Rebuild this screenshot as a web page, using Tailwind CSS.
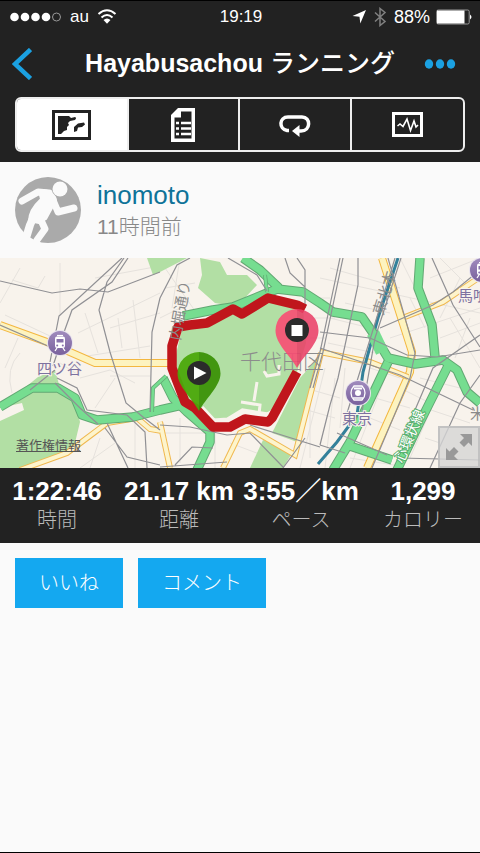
<!DOCTYPE html>
<html lang="ja">

<head>
  <meta charset="UTF-8" />
  <meta name="viewport" content="width=device-width, initial-scale=1.0" />
  <title>Hayabusachou ランニング</title>
  <script src="https://cdn.jsdelivr.net/npm/@tailwindcss/browser@4"></script>
</head>

<body class="min-h-screen bg-[#fafafa] border-b border-black font-['Liberation_Sans','Noto_Sans_CJK_JP',sans-serif]">
  <header class="bg-[#222] text-white border-t border-black">
    <!-- Status bar -->
    <div class="grid grid-cols-3 items-center h-8 pl-2.5 pr-2 text-[17px]">
      <div class="flex items-center gap-2">
        <svg class="w-[52px] h-3" viewBox="0 0 52 12" fill="#fff">
          <circle cx="4.5" cy="6" r="4.3" />
          <circle cx="15" cy="6" r="4.3" />
          <circle cx="25.500" cy="6" r="4.3" />
          <circle cx="36" cy="6" r="4.3" />
          <circle cx="46.500" cy="6" r="4" fill="none" stroke="#999" />
        </svg>
        <span>au</span>
        <svg class="w-5 h-4" viewBox="0 0 20 16" fill="none" stroke="#fff" stroke-width="2">
          <path d="M1.500 5Q10 -2.500 18.500 5M4.500 8.500Q10 3.500 15.500 8.500" />
          <path d="M6.500 11Q10 8 13.500 11L10 14.800z" fill="#fff" stroke="none" />
        </svg>
      </div>
      <div class="text-center">19:19</div>
      <div class="flex items-center justify-end gap-1.5">
        <svg class="w-3.5 h-3.5" viewBox="0 0 14 14" fill="#fff">
          <path d="M14 0L8.300 13.500L7.500 6.700L0.500 6z" />
        </svg>
        <svg class="w-4 h-5" viewBox="0 0 16 20" fill="none" stroke="#808080" stroke-width="1.5">
          <path d="M3 5.500L13 14.500L8 18.500V1.500L13 5.500L3 14.500" />
        </svg>
        <span class="text-lg">88%</span>
        <svg class="w-9 h-4" viewBox="0 0 36 16">
          <rect x=".7" y="1" width="32.500" height="14" rx="1.500" fill="none" stroke="#999" />
          <path d="M1 1.500H28.500V14.500H1z" fill="#fff" />
          <path d="M34 5.500Q37 8 34 10.500z" fill="#fff" />
        </svg>
      </div>
    </div>

    <!-- Title bar -->
    <div class="flex items-center justify-between h-[62px] px-3">
      <button class="w-10 h-10" aria-label="戻る">
        <svg class="w-5 h-8" viewBox="0 0 20 32" fill="none" stroke="#1ba1e2" stroke-width="4.500">
          <path d="M18.500 1.500L3 16L18.500 30.500" />
        </svg>
      </button>
      <h1 class="text-[25px] font-bold whitespace-nowrap">Hayabusachou <span class="font-medium">ランニング</span></h1>
      <button class="flex justify-end items-center w-10 h-10 pr-3" aria-label="メニュー">
        <svg class="w-8 h-2.5 shrink-0" viewBox="0 0 32 10" fill="#1ba1e2">
          <ellipse cx="5" cy="5" rx="4.200" ry="4.700" />
          <ellipse cx="16" cy="5" rx="4.200" ry="4.700" />
          <ellipse cx="27" cy="5" rx="4.200" ry="4.700" />
        </svg>
      </button>
    </div>

    <!-- Tabs -->
    <nav class="px-[15px] pt-0.5 pb-2.5">
      <div class="grid grid-cols-4 h-[55px] border-2 border-[#eee] rounded-md divide-x-2 divide-[#eee] overflow-hidden">
        <button class="flex items-center justify-center bg-white" aria-label="地図">
          <svg class="w-10 h-[30px]" viewBox="0 0 40 30" fill="#222">
            <rect x="1.500" y="1.500" width="36" height="27" fill="none" stroke="#222" stroke-width="3" />
            <path d="M6 6H17L19 8L23 7Q25 8 23 10L18 11L16 13L17 15L15 17L15 20L12 21L9 24H6z" />
            <path d="M22 20L22 17L26 13.500L32 12.500L33 14.500L30 17L26 17.500L25 21L22 22z" />
          </svg>
        </button>
        <button class="flex items-center justify-center" aria-label="詳細">
          <svg class="w-6 h-[34px]" viewBox="0 0 24 34">
            <path d="M7 0H24V34H0V7z" fill="#fff" />
            <path d="M10 3.500H20.500V30.500H3.500V9.500H10z" fill="#222" />
            <path d="M5 15H8M10 15H20M5 20.500H8M10 20.500H20M5 26H8M10 26H20" stroke="#fff" stroke-width="2.500" />
          </svg>
        </button>
        <button class="flex items-center justify-center" aria-label="ラップ">
          <svg class="w-8 h-6" viewBox="0 0 32 24">
            <path d="M10 17.500H8C-.5 16 0 4 9 4H23C32 4 32 18 22 18H19" fill="none" stroke="#fff" stroke-width="3.500" />
            <path d="M13 18L20.500 12V24z" fill="#fff" />
          </svg>
        </button>
        <button class="flex items-center justify-center" aria-label="グラフ">
          <svg class="w-[31px] h-[25px]" viewBox="0 0 31 25" fill="none" stroke="#fff">
            <rect x="1.500" y="1.500" width="28" height="22" stroke-width="3" />
            <path d="M5.500 14L8 12L11 14.500L15 7L18.500 18.500L22 9L24 15L26 13" stroke-width="1.600" />
          </svg>
        </button>
      </div>
    </nav>
  </header>

  <main>
    <!-- User -->
    <section class="flex gap-4 h-24 px-[15px] pt-[15px]">
      <svg class="w-[66px] h-[66px]" viewBox="0 0 66 66" fill="none" stroke="#fafafa" stroke-linecap="round" stroke-linejoin="round">
        <circle cx="33" cy="33" r="33" fill="#aaa" stroke="none" />
        <circle cx="45" cy="12" r="7.500" fill="#fafafa" stroke="none" />
        <path d="M7 24L23 15L34 16" stroke-width="7" />
        <path d="M24 14Q34 11 40 20Q43 25 37 31L31 42L24 46L14 44Q14 33 26 22z" fill="#fafafa" stroke-width="2" />
        <path d="M38 23L43 35L59 31" stroke-width="7" />
        <path d="M19 39L15 48L11 61" stroke-width="8" />
        <path d="M25 41L30 52L22 63" stroke-width="7" />
      </svg>
      <div class="flex flex-col">
        <a href="#" class="text-[26px] leading-9 text-[#0f7399]">inomoto</a>
        <p class="text-[21px] leading-7 text-[#888] font-light">11時間前</p>
      </div>
    </section>

    <!-- Map -->
    <section class="relative">
      <svg class="block w-full h-[210px]" viewBox="0 0 480 210" preserveAspectRatio="xMidYMid slice" fill="none">
        <rect width="480" height="210" fill="#f8f3ec" />

        <!-- side streets -->
        <g stroke="#e6e2dd" stroke-width="1">
          <path d="M0 45L20 10M12 22L38 30L45 18M60 58V5M5 57L50 78M78 75L160 35M85 55L98 95M95 20L160 8M110 70L160 55M75 100L150 88M110 118H150M118 60L122 90M133 42L140 100M20 95Q5 110 12 135M80 120L110 112L135 125M95 150L115 120M60 105L80 118M100 180L90 210M115 185L80 210M135 165V210M5 110L18 80" />
          <path d="M165 10L200 60M160 60L180 50M165 30L195 25M180 0L172 50M165 175H205M180 160V205M230 185L270 200M215 165V210M310 40H330M312 60H335M310 80H325M305 130L340 140M300 150L335 160M310 120V200M325 110L300 210M335 120L325 210" />
          <path d="M320 20L480 55M330 10L400 30M345 45L390 55M390 80L480 50M400 0L430 60M440 0L480 40M430 20L480 0M450 60L480 110M440 80L480 65M330 60L370 70M328 85L375 95M345 110L340 170M370 110L400 120M375 140L410 150M370 160L400 172M385 120L350 210M420 120L460 130M425 150L470 165M440 130L410 200M400 130L430 145M350 200L400 208M425 180L440 185M425 70L410 40M460 20L440 60M470 60L455 100" />
        </g>

        <!-- parks -->
        <g fill="#b2dfa4">
          <path d="M0 150L38 119L55 112L60 130L75 142L80 164L74 189L50 200L20 210H0V163L24 152L22 145z" />
          <path d="M147 0H187L160 14L153 17z" />
          <path d="M200 0L220 4L227 17L247 17L257 27L242 43L227 47L215 45L198 30L202 17z" />
          <path d="M183 66L207 62L233 50L242 57L268 38L303 50L306 85L297 114L270 164L245 160L218 170L200 154L182 140L172 114z" />
          <path d="M300 120L318 100L300 185L272 175z" />
          <path d="M263 182L292 195L283 210H250z" />
        </g>
        <path d="M200 151L213 165L228 164L243 155L268 159L273 156" stroke="#f8f3ec" stroke-width="9" />
        <path d="M264 113L267 118L279 116L279 107M257 124L254 143M241 144L260 147L259 156" stroke="#f8f3ec" stroke-width="3" />

        <!-- yellow roads -->
        <g stroke="#f3b740" stroke-width="8">
          <path d="M0 67L47 84L95 105H172" />
          <path d="M382 0L412 94L410 114L367 210" />
        </g>
        <g stroke="#fdf3bf" stroke-width="6">
          <path d="M0 67L47 84L95 105H172" />
          <path d="M382 0L412 94L410 114L367 210" />
        </g>
        <g stroke="#f0b84e" stroke-width="6">
          <path d="M20 212L67 195L107 165L137 160L150 171L162 173M160 164L170 210" />
          <path d="M321 95L295 197L250 171L240 175L223 210M320 94L370 104L408 119M405 59L443 44L480 19" />
        </g>
        <g stroke="#fdf4cc" stroke-width="4">
          <path d="M20 212L67 195L107 165L137 160L150 171L162 173M160 164L170 210" />
          <path d="M321 95L295 197L250 171L240 175L223 210M320 94L370 104L408 119M405 59L443 44L480 19" />
        </g>

        <!-- shinkansen -->
        <path d="M398 0L378 60L363 114L357 157L337 184L318 206" stroke="#33809a" stroke-width="3" />

        <!-- expressways -->
        <g stroke="#62a873" stroke-width="9.500" stroke-linejoin="round">
          <path d="M0 149L32 130H58L75 140L82 157L97 162L133 159L160 152L182 147" />
          <path d="M183 58L213 52L233 49L277 31L303 34L320 45L333 54L362 59L373 75L388 100L415 106L443 102L457 112L467 134L480 145" />
          <path d="M243 0L260 12L279 30M163 120L173 140L187 154L210 174V184L197 212" />
          <path d="M420 0L418 30L432 67L435 99M388 104L350 184L333 212M350 188L392 202M448 108L420 164L397 212" />
        </g>
        <g stroke="#76dd90" stroke-width="7.500" stroke-linejoin="round">
          <path d="M0 149L32 130H58L75 140L82 157L97 162L133 159L160 152L182 147" />
          <path d="M183 58L213 52L233 49L277 31L303 34L320 45L333 54L362 59L373 75L388 100L415 106L443 102L457 112L467 134L480 145" />
          <path d="M243 0L260 12L279 30M163 120L173 140L187 154L210 174V184L197 212" />
          <path d="M420 0L418 30L432 67L435 99M388 104L350 184L333 212M350 188L392 202M448 108L420 164L397 212" />
        </g>
        <path d="M152 154L153 130L166 118M265 17L267 34" stroke="#62a873" stroke-width="4" />
        <path d="M152 154L153 130L166 118M265 17L267 34" stroke="#76dd90" stroke-width="2.500" />
        <path d="M373 75L382 94" stroke="#76dd90" stroke-width="13" />

        <!-- railways -->
        <g stroke="#909094" stroke-width="1.200">
          <path d="M0 23L52 35L80 31L108 34L160 14M122 0L59 58L50 104M128 0L112 24L72 52L63 77L53 108M124 0L107 24L99 52L110 94L126 145L143 159L160 172M160 40L152 74L150 154" />
          <path d="M0 67L48 88M107 165L128 210M105 170L127 199L160 207M57 120L77 130L87 152L127 157L145 174L147 210M30 132L55 112M55 125L80 150L98 166" />
          <path d="M160 167L190 169L227 177L250 175L283 209M160 209L227 204M213 190L192 189L175 207M250 167L320 189M305 180L283 210M285 0L290 15L305 29V50M297 0L305 12V30M228 0L257 17L267 33M160 40L177 7L190 0" />
          <path d="M320 74L370 80L407 97L437 99L480 92M340 0L320 94L310 130M343 0L323 94L313 130M358 0V27L338 120L330 147L320 187M380 70L433 47L453 34L480 12M432 0L453 47L480 89" />
          <path d="M320 90L400 117L473 152M480 77L433 110L400 187M480 117L460 145L430 210M400 200L480 202M337 175L387 197M395 0L372 75L343 168M401 0L375 80L360 165M320 187L345 195M388 0L415 95L410 120L372 210" />
        </g>

        <!-- route -->
        <path d="M305 51L297 47L268 40L242 56L233 51L207 65L190 67L178 69L172 88V110L185 144L195 150L213 169L230 169L245 161L268 164L272 160L297 114" stroke="#c0161c" stroke-width="9.500" stroke-linejoin="round" />

        <!-- place names -->
        <g fill="#7d72a0" font-size="15" stroke="#f8f3ec" stroke-width="2" paint-order="stroke">
          <text x="37" y="116">四ツ谷</text>
          <text x="342" y="166">東京</text>
          <text x="458" y="43">馬喰</text>
        </g>
        <g fill="#8a8a8a" font-size="15">
          <text x="180" y="83" transform="rotate(-80 180 83)">内堀通り</text>
          <text x="383" y="58" transform="rotate(-73 383 58)">東北本</text>
          <text x="470" y="161">米</text>
        </g>
        <text x="403" y="206" font-size="14" fill="#fff" stroke="#58b06e" stroke-width="2" paint-order="stroke" transform="rotate(-67 403 206)">心環状線</text>
        <text x="240" y="111" font-size="21" font-weight="300" fill="#8c8c8c">千代田区</text>

        <!-- stations -->
        <defs>
          <linearGradient id="station" x1="0" y1="0" x2="0" y2="1">
            <stop offset="0" stop-color="#a08bbd" />
            <stop offset="1" stop-color="#79619d" />
          </linearGradient>
          <g id="badge">
            <circle r="13" fill="#e9e4ee" />
            <circle r="12" fill="url(#station)" />
          </g>
          <g id="train">
            <path d="M-3 -7.500H3" stroke="#fff" stroke-width="1.200" />
            <rect x="-5" y="-6.500" width="10" height="11.500" rx="2" fill="#fff" />
            <path d="M-3.500 -4H3.500V-.5H-3.500z" fill="#8873ab" />
            <circle cx="-2.800" cy="2.500" r="1" fill="#8873ab" />
            <circle cx="2.800" cy="2.500" r="1" fill="#8873ab" />
            <path d="M-3 5L-5 8M3 5L5 8" stroke="#fff" stroke-width="1.300" />
          </g>
        </defs>
        <g transform="translate(60 85)">
          <use href="#badge" />
          <use href="#train" />
        </g>
        <g transform="translate(482 12)">
          <use href="#badge" />
          <use href="#train" />
        </g>
        <g transform="translate(358 135)">
          <use href="#badge" />
          <path d="M-4 -7H4Q7 -4 7 0T4 7H-4Q-7 4 -7 0T-4 -7z" stroke="#fff" stroke-width="1.300" />
          <path d="M-4 -4.500H4" stroke="#fff" stroke-width="2" />
          <circle r="3" fill="#fff" />
          <path d="M-5 5H5" stroke="#fff" stroke-width="1.500" />
        </g>

        <!-- start pin -->
        <path d="M199 94A21.500 21.500 0 0 0 177.500 115.500C177.500 128 192 140 199 153z" fill="#4aa80a" fill-opacity=".94" />
        <path d="M199 94A21.500 21.500 0 0 1 220.500 115.500C220.500 128 206 140 199 153z" fill="#3a9206" fill-opacity=".94" />
        <circle cx="199" cy="115" r="12" fill="#2b2b2b" />
        <path d="M194 108.500V121.500L206.500 115z" fill="#fff" />

        <!-- finish pin -->
        <path d="M297 51A21.500 21.500 0 0 0 275.500 72.500C275.500 86 290 97 297 110z" fill="#fb4a72" fill-opacity=".88" />
        <path d="M297 51A21.500 21.500 0 0 1 318.500 72.500C318.500 86 304 97 297 110z" fill="#e94068" fill-opacity=".88" />
        <circle cx="297" cy="72" r="12" fill="#2b2b2b" />
        <rect x="291.500" y="67" width="11" height="11" fill="#fff" />
      </svg>
      <a href="#" class="absolute left-4 bottom-3 text-[13px] leading-5 text-[#555] underline">著作権情報</a>
      <button class="absolute right-0 bottom-0 flex items-center justify-center w-[42px] h-[42px] bg-[#d5d5d5]/80 border-2 border-[#bbb]/80" aria-label="地図を拡大">
        <svg class="w-8 h-8 shrink-0" viewBox="0 0 32 32" fill="#999">
          <path d="M29 3V15L25.500 11.500L21 16L16.500 11.500L21 7L17 3zM3 29V17L6.500 20.500L11 16L15.500 20.500L11 25L15 29z" />
        </svg>
      </button>
    </section>

    <!-- Stats -->
    <section class="bg-[#222] overflow-hidden">
      <dl class="grid grid-cols-4 -mx-1 h-[75px] pt-2 text-center whitespace-nowrap">
        <div class="flex flex-col-reverse justify-end">
          <dt class="text-xl leading-7 font-light text-[#bbb]">時間</dt>
          <dd class="text-[26px] leading-[30px] font-bold text-white">1:22:46</dd>
        </div>
        <div class="flex flex-col-reverse justify-end">
          <dt class="text-xl leading-7 font-light text-[#bbb]">距離</dt>
          <dd class="text-[26px] leading-[30px] font-bold text-white">21.17 km</dd>
        </div>
        <div class="flex flex-col-reverse justify-end">
          <dt class="text-xl leading-7 font-light text-[#bbb]">ペース</dt>
          <dd class="text-[26px] leading-[30px] font-bold text-white">3:55／km</dd>
        </div>
        <div class="flex flex-col-reverse justify-end">
          <dt class="text-xl leading-7 font-light text-[#bbb]">カロリー</dt>
          <dd class="text-[26px] leading-[30px] font-bold text-white">1,299</dd>
        </div>
      </dl>
    </section>

    <div class="flex gap-[15px] p-[15px]">
      <button class="h-[50px] px-6 bg-[#14a8f0] text-xl font-light text-white">いいね</button>
      <button class="h-[50px] px-6 bg-[#14a8f0] text-xl font-light text-white">コメント</button>
    </div>
  </main>
</body>
</html>
